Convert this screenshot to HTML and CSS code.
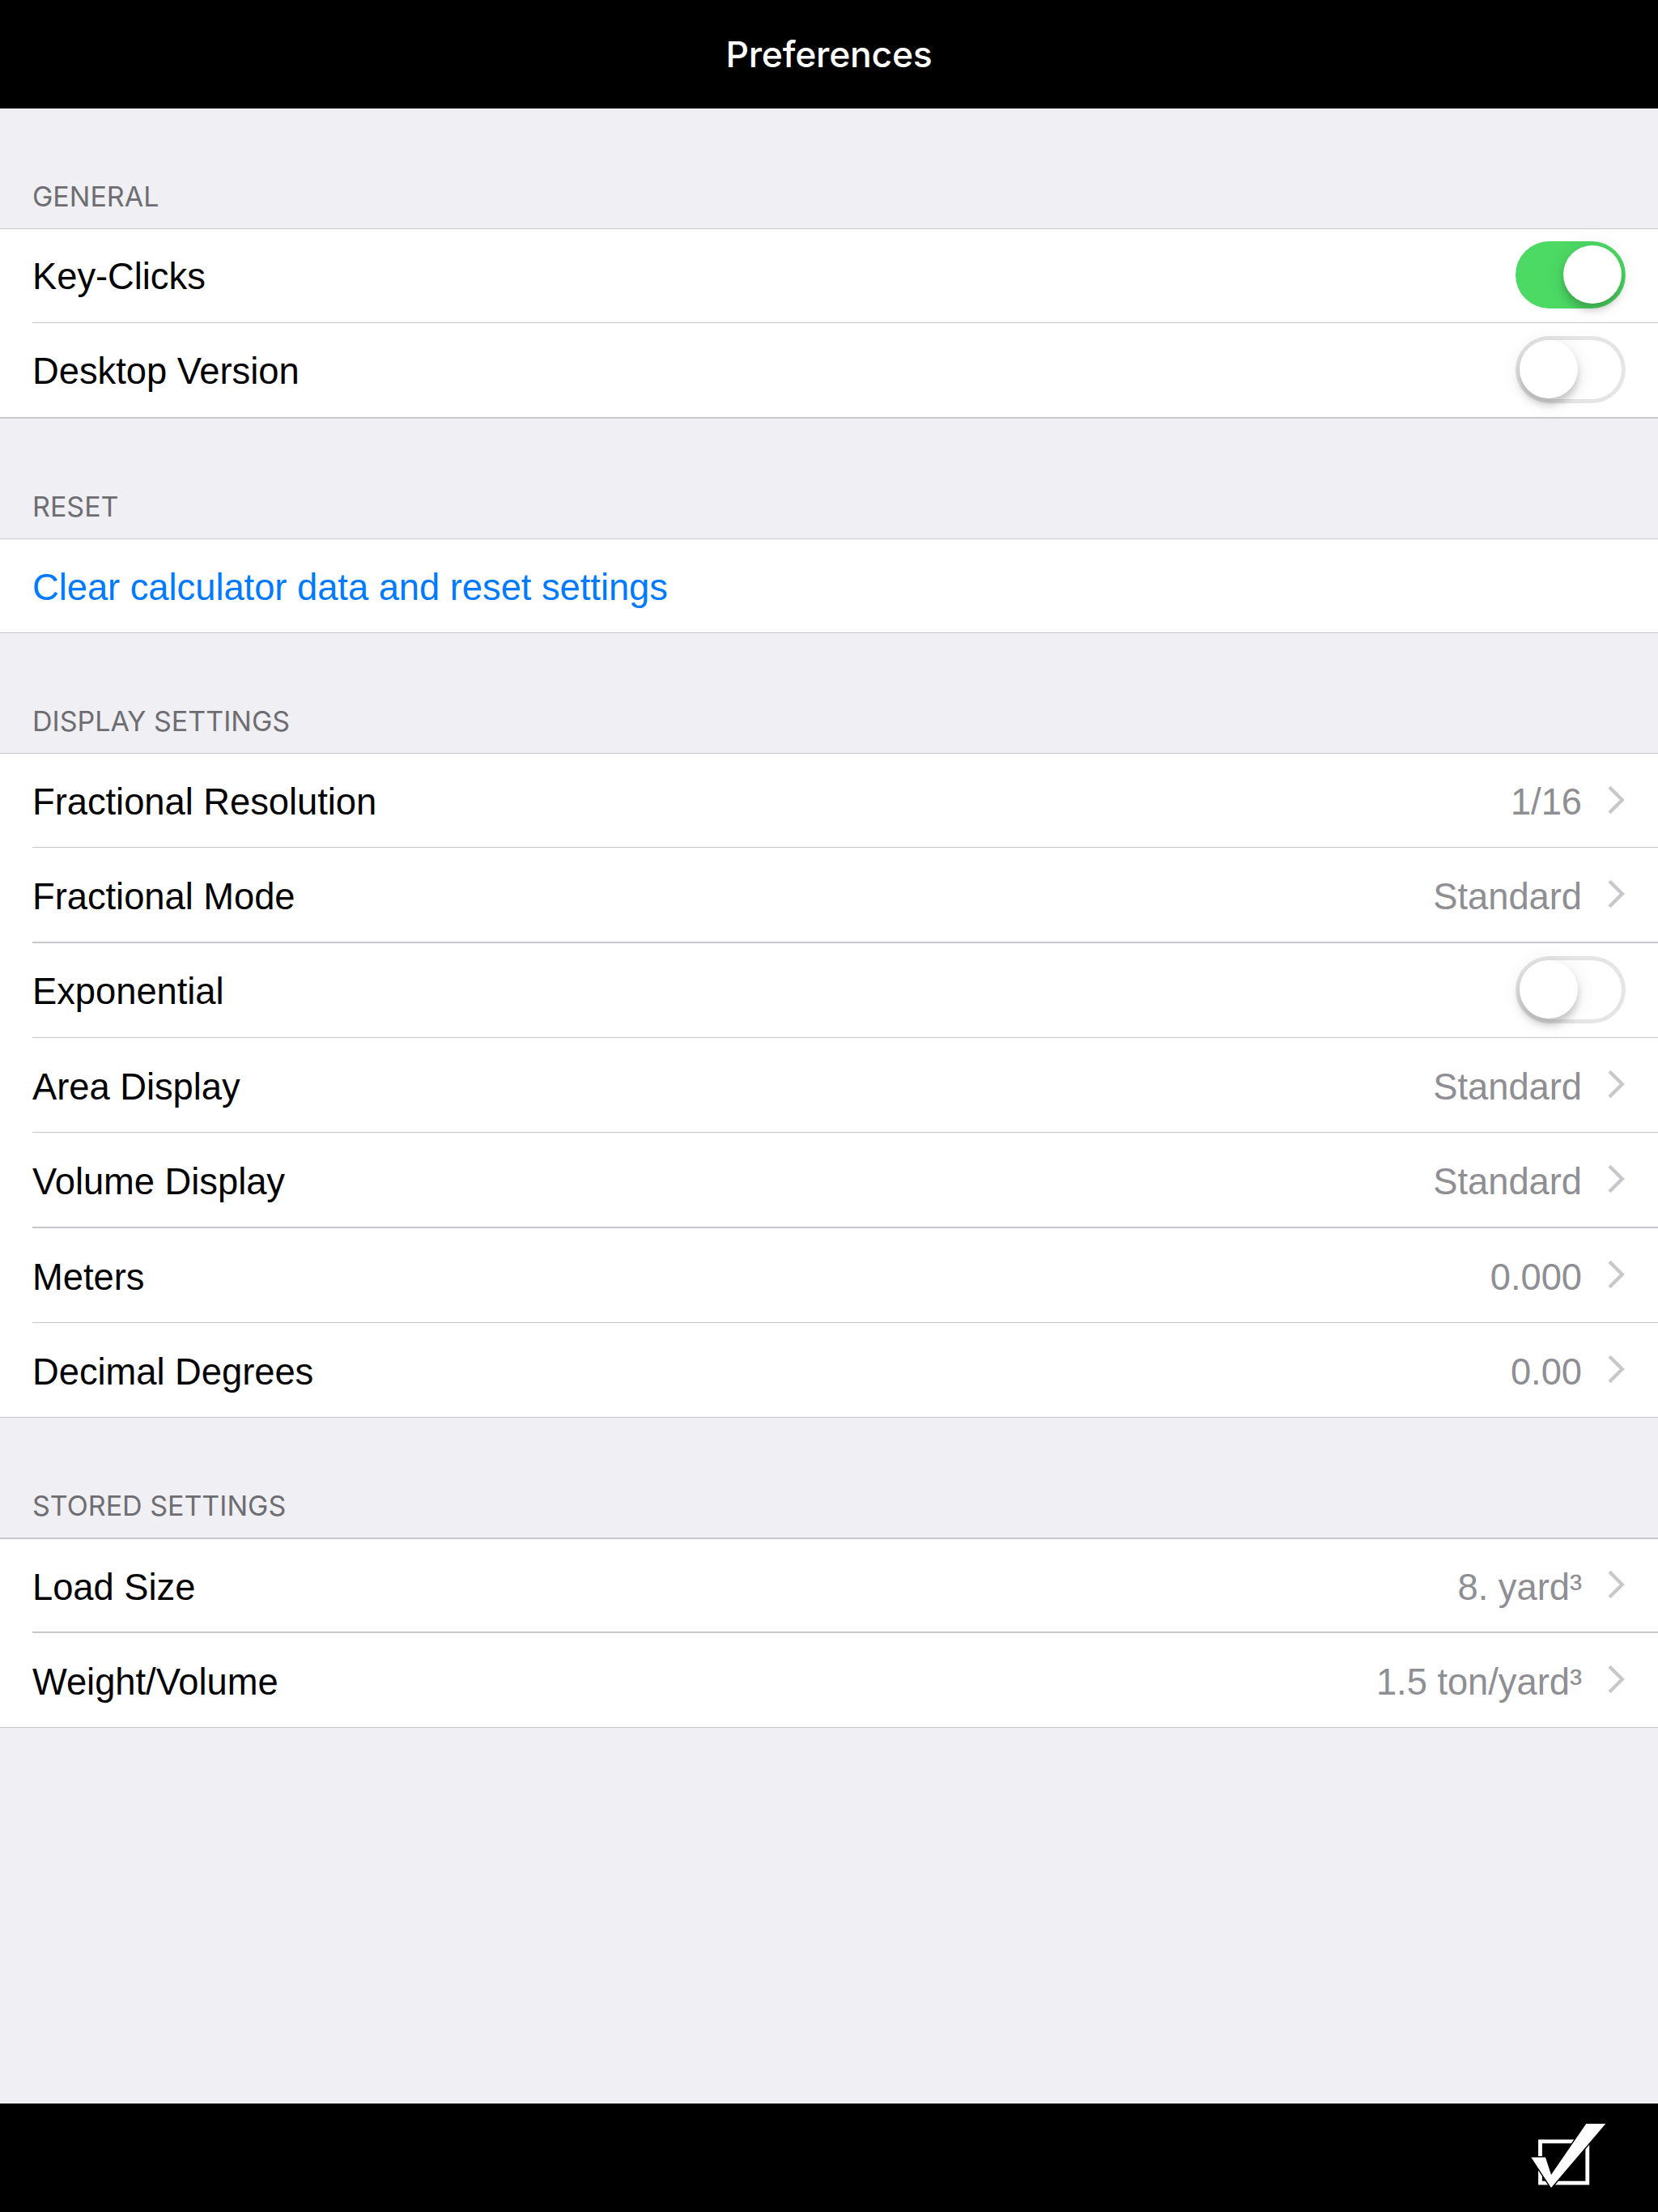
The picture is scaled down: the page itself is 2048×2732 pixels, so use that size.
FILE: index.html
```html
<!DOCTYPE html>
<html lang="en">
<head>
<meta charset="utf-8">
<title>Preferences</title>
<link rel="stylesheet" href="styles.css">
</head>
<body>
<svg class="defs" aria-hidden="true">
  <symbol id="chevron" viewBox="0 0 22 36"><path d="M2 2.2 17.8 18 2 33.8" fill="none" stroke="#c7c7cc" stroke-width="4.3"/></symbol>
</svg>
<div class="screen">
  <header class="bar top"><h1>Preferences</h1></header>
  <main>
    <section>
      <h2>General</h2>
      <ul class="list">
        <li class="row toggle short"><span class="label">Key-Clicks</span><span class="switch on"><i></i></span></li>
        <li class="row toggle tall thick"><span class="label">Desktop Version</span><span class="switch"><i></i></span></li>
      </ul>
    </section>
    <section>
      <h2>Reset</h2>
      <ul class="list">
        <li class="row short"><span class="label action">Clear calculator data and reset settings</span></li>
      </ul>
    </section>
    <section>
      <h2>Display Settings</h2>
      <ul class="list">
        <li class="row short"><span class="label">Fractional Resolution</span><span class="value">1/16</span><svg class="chev"><use href="#chevron"/></svg></li>
        <li class="row tall thick"><span class="label">Fractional Mode</span><span class="value">Standard</span><svg class="chev"><use href="#chevron"/></svg></li>
        <li class="row toggle"><span class="label">Exponential</span><span class="switch"><i></i></span></li>
        <li class="row"><span class="label">Area Display</span><span class="value">Standard</span><svg class="chev"><use href="#chevron"/></svg></li>
        <li class="row tall thick"><span class="label">Volume Display</span><span class="value">Standard</span><svg class="chev"><use href="#chevron"/></svg></li>
        <li class="row"><span class="label">Meters</span><span class="value">0.000</span><svg class="chev"><use href="#chevron"/></svg></li>
        <li class="row"><span class="label">Decimal Degrees</span><span class="value">0.00</span><svg class="chev"><use href="#chevron"/></svg></li>
      </ul>
    </section>
    <section>
      <h2>Stored Settings</h2>
      <ul class="list heavy">
        <li class="row short thick"><span class="label">Load Size</span><span class="value">8. yard³</span><svg class="chev"><use href="#chevron"/></svg></li>
        <li class="row"><span class="label">Weight/Volume</span><span class="value">1.5 ton/yard³</span><svg class="chev"><use href="#chevron"/></svg></li>
      </ul>
    </section>
  </main>
  <footer class="bar bottom">
    <svg class="check" viewBox="0 0 94 82">
      <path d="M12.5 22.8H70.8V74.2H12.5Z" fill="none" stroke="#fff" stroke-width="4.8"/>
      <path class="tick" d="M1.3 42.5H19L26 64 69.3 1H93.3L26 80Z"/>
    </svg>
  </footer>
</div>
</body>
</html>
```
FILE: styles.css
```css
* { box-sizing: border-box; margin: 0; padding: 0; }
body { background: #efeff4; font-family: "Liberation Sans", Arial, sans-serif; }
.defs { display: none; }
.screen { display: flex; flex-direction: column; width: 2048px; height: 2732px; background: #efeff4; }
main { flex: 1; }
.bar { display: flex; height: 134px; flex: none; align-items: center; background: #000; }
.top { justify-content: center; }
.bottom { justify-content: flex-end; padding-right: 64px; }
h1 { color: #fff; font: 550 44.4px/60px Inter, sans-serif; letter-spacing: -0.2px; }
h2 {
  display: flex; align-items: flex-end; height: 148px; padding: 0 40px 18px;
  color: #6d6d72; font: 400 34px/42px Inter, sans-serif; text-transform: uppercase;
}
.list { list-style: none; background: #fff; border-top: 1px solid #c8c7cc; }
.list.heavy { border-top-width: 2px; }
.row {
  display: flex; align-items: center; height: 117px; margin-left: 40px; padding-right: 40px;
  border-bottom: 1px solid #c8c7cc; font-size: 45.33px; line-height: 52px; letter-spacing: -0.03px;
}
.row.short { height: 116px; }
.row.tall { height: 118px; }
.row.thick { border-bottom-width: 2px; }
.row:last-child { margin-left: 0; padding-left: 40px; }
.label { flex: 1; color: #000; padding-top: 5px; }
.toggle .label { padding-top: 3px; }
.action { color: #007aff; }
.value { color: #8e8e93; padding-top: 5px; margin-right: 32px; }
.chev { width: 22px; height: 36px; margin-bottom: 2px; }
.switch {
  display: flex; width: 136px; height: 83px; padding: 5px; margin-bottom: 2px; border-radius: 42px;
  box-shadow: inset 0 0 0 5px #e5e5e5;
}
.switch i {
  width: 72px; height: 72px; border-radius: 50%; background: #fff;
  box-shadow: 0 8px 10px rgba(0,0,0,.18), 0 3px 24px rgba(0,0,0,.1);
}
.switch.on { justify-content: flex-end; background: #4cd964; box-shadow: none; }
.check { width: 94px; height: 82px; margin-bottom: 4px; }
.tick { fill: #fff; stroke: #000; stroke-width: 3px; paint-order: stroke; }
```
